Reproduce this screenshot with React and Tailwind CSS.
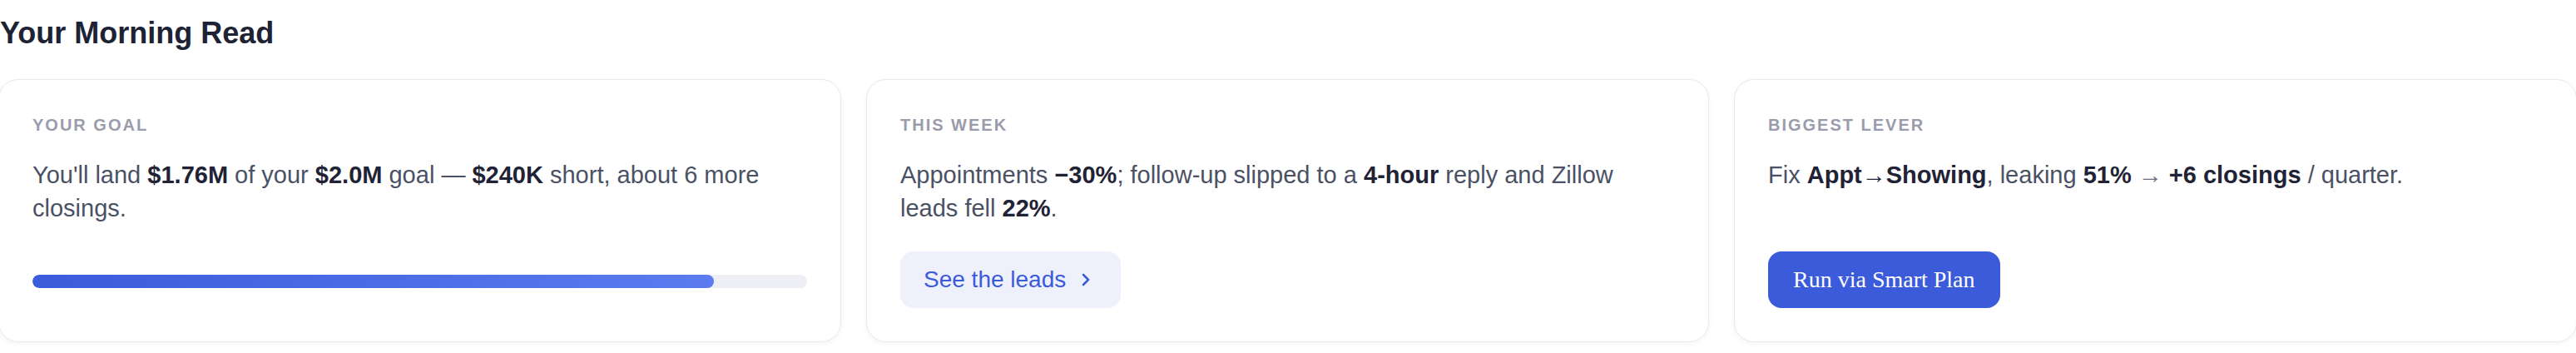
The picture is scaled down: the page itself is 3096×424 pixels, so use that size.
import { ChevronRight } from "lucide-react";

const B = ({ children }) => <b className="font-bold text-[#1f2335]">{children}</b>;

function Card({ label, children }) {
  return (
    <div className="flex flex-col rounded-[24px] border border-[#e8e8ef] bg-white p-[40px] shadow-[0_2px_6px_rgba(30,30,70,0.05)]">
      <div className="text-[20px] leading-[28px] font-bold tracking-[0.1em] uppercase text-[#9a9cad]">{label}</div>
      {children}
    </div>
  );
}

export default function App() {
  return (
    <div className="min-h-screen bg-white font-['Liberation_Sans',Arial,sans-serif] overflow-hidden">
      <h2 className="pt-[18px] text-[36px] leading-[44px] font-bold text-[#1e2235]">Your Morning Read</h2>

      <div className="mt-[33px] ml-[-2px] w-[3099px] grid grid-cols-3 gap-[30px]">
        {/* Goal */}
        <Card label="Your goal">
          <p className="mt-[26px] text-[29px] leading-[40px] text-[#4b5164]">
            You'll land <B>$1.76M</B> of your <B>$2.0M</B> goal — <B>$240K</B> short, about 6 more closings.
          </p>
          <div className="mt-auto mb-[24px] h-[16px] rounded-full bg-[#eeeff5] overflow-hidden">
            <div className="h-full w-[88%] rounded-full bg-linear-to-r from-[#3b5bdb] to-[#5b7bef]" />
          </div>
        </Card>

        {/* This week */}
        <Card label="This week">
          <p className="mt-[26px] text-[29px] leading-[40px] text-[#4b5164]">
            Appointments <B>−30%</B>; follow-up slipped to a <B>4-hour</B> reply and Zillow leads fell <B>22%</B>.
          </p>
          <button className="mt-[32px] self-start flex items-center gap-[12px] h-[68px] pl-[28px] pr-[30px] rounded-[16px] bg-[#eef0fc] text-[28px] text-[#3b5bdb]">
            See the leads
            <ChevronRight size={24} strokeWidth={2.5} />
          </button>
        </Card>

        {/* Biggest lever */}
        <Card label="Biggest lever">
          <p className="mt-[26px] text-[29px] leading-[40px] text-[#4b5164]">
            Fix <B>Appt→Showing</B>, leaking <B>51%</B> <span className="text-[#6b7080]">→</span> <B>+6 closings</B> / quarter.
          </p>
          <button className="mt-auto self-start h-[68px] px-[30px] rounded-[16px] bg-[#3b5bdb] text-white text-[28px] font-['Liberation_Serif',serif]">
            Run via Smart Plan
          </button>
        </Card>
      </div>
    </div>
  );
}
